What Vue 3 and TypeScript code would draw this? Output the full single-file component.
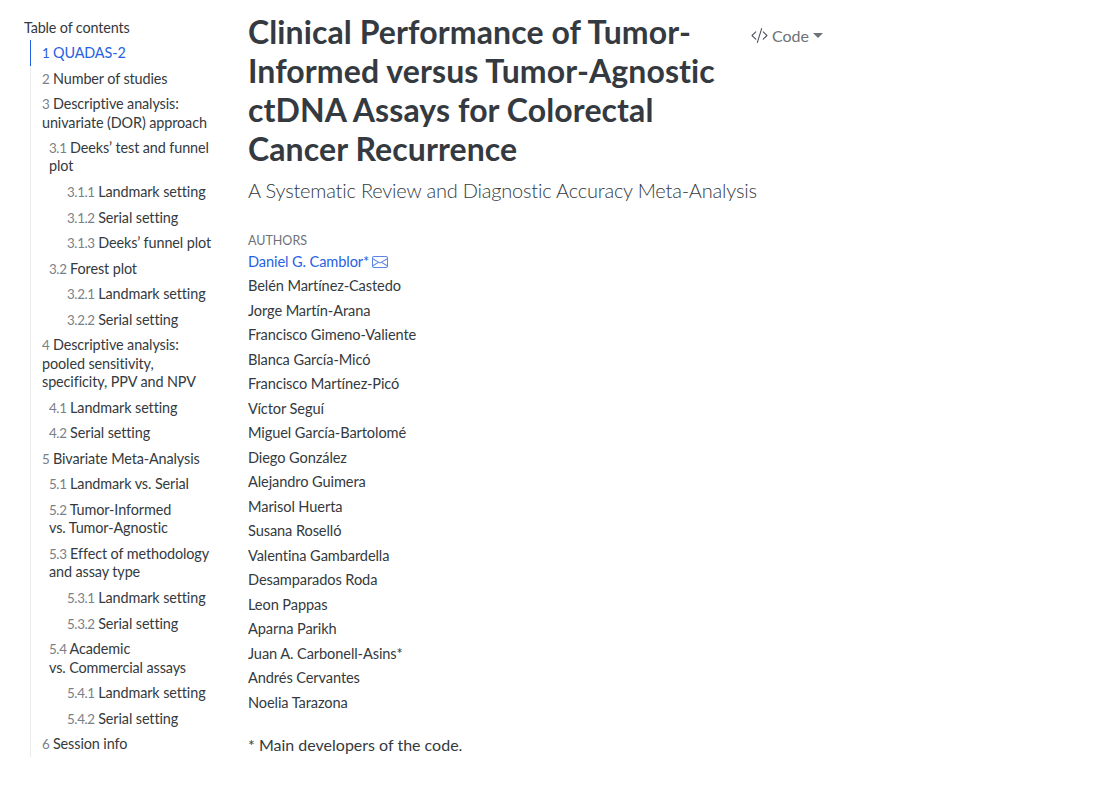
<script setup lang="ts">
type TocItem = { num: string; label: string; level: number; active?: boolean };

const toc: TocItem[] = [
  { num: '1', label: 'QUADAS-2', level: 1, active: true },
  { num: '2', label: 'Number of studies', level: 1 },
  { num: '3', label: 'Descriptive analysis: univariate (DOR) approach', level: 1 },
  { num: '3.1', label: 'Deeks’ test and funnel plot', level: 2 },
  { num: '3.1.1', label: 'Landmark setting', level: 3 },
  { num: '3.1.2', label: 'Serial setting', level: 3 },
  { num: '3.1.3', label: 'Deeks’ funnel plot', level: 3 },
  { num: '3.2', label: 'Forest plot', level: 2 },
  { num: '3.2.1', label: 'Landmark setting', level: 3 },
  { num: '3.2.2', label: 'Serial setting', level: 3 },
  { num: '4', label: 'Descriptive analysis: pooled sensitivity, specificity, PPV and NPV', level: 1 },
  { num: '4.1', label: 'Landmark setting', level: 2 },
  { num: '4.2', label: 'Serial setting', level: 2 },
  { num: '5', label: 'Bivariate Meta-Analysis', level: 1 },
  { num: '5.1', label: 'Landmark vs. Serial', level: 2 },
  { num: '5.2', label: 'Tumor-Informed vs.\u00a0Tumor-Agnostic', level: 2 },
  { num: '5.3', label: 'Effect of methodology and assay type', level: 2 },
  { num: '5.3.1', label: 'Landmark setting', level: 3 },
  { num: '5.3.2', label: 'Serial setting', level: 3 },
  { num: '5.4', label: 'Academic vs.\u00a0Commercial assays', level: 2 },
  { num: '5.4.1', label: 'Landmark setting', level: 3 },
  { num: '5.4.2', label: 'Serial setting', level: 3 },
  { num: '6', label: 'Session info', level: 1 },
];

const authors = [
  'Belén Martínez-Castedo',
  'Jorge Martín-Arana',
  'Francisco Gimeno-Valiente',
  'Blanca García-Micó',
  'Francisco Martínez-Picó',
  'Víctor Seguí',
  'Miguel García-Bartolomé',
  'Diego González',
  'Alejandro Guimera',
  'Marisol Huerta',
  'Susana Roselló',
  'Valentina Gambardella',
  'Desamparados Roda',
  'Leon Pappas',
  'Aparna Parikh',
  'Juan A. Carbonell-Asins*',
  'Andrés Cervantes',
  'Noelia Tarazona',
];
</script>

<template>
  <div class="page">
    <nav class="sidebar">
      <h2 class="toc-title">Table of contents</h2>
      <ul class="toc">
        <li v-for="item in toc" :key="item.num" :class="['toc-item', `lvl-${item.level}`, { active: item.active }]">
          <span class="num">{{ item.num }}</span> {{ item.label }}
        </li>
      </ul>
    </nav>

    <main class="content">
      <header class="head">
        <div class="title-row">
          <h1 class="title">Clinical Performance of Tumor-Informed versus Tumor-Agnostic ctDNA Assays for Colorectal Cancer Recurrence</h1>
          <button class="code-btn">
            <svg class="code-icon" viewBox="0 0 16 16" width="17" height="17" fill="currentColor">
              <path d="M10.478 1.647a.5.5 0 1 0-.956-.294l-4 13a.5.5 0 0 0 .956.294zM4.854 4.146a.5.5 0 0 1 0 .708L1.707 8l3.147 3.146a.5.5 0 0 1-.708.708l-3.5-3.5a.5.5 0 0 1 0-.708l3.5-3.5a.5.5 0 0 1 .708 0m6.292 0a.5.5 0 0 0 0 .708L14.293 8l-3.147 3.146a.5.5 0 0 0 .708.708l3.5-3.5a.5.5 0 0 0 0-.708l-3.5-3.5a.5.5 0 0 0-.708 0" />
            </svg>
            <span>Code</span>
            <i class="caret"></i>
          </button>
        </div>
        <p class="subtitle">A Systematic Review and Diagnostic Accuracy Meta-Analysis</p>
      </header>

      <section class="authors">
        <div class="authors-label">AUTHORS</div>
        <div class="author link">
          Daniel G. Camblor*
          <svg class="mail" viewBox="0 0 16 16" width="16" height="16" fill="currentColor">
            <path d="M0 4a2 2 0 0 1 2-2h12a2 2 0 0 1 2 2v8a2 2 0 0 1-2 2H2a2 2 0 0 1-2-2zm2-1a1 1 0 0 0-1 1v.217l7 4.2 7-4.2V4a1 1 0 0 0-1-1zm13 2.383-4.708 2.825L15 11.105zm-.034 6.876-5.64-3.471L8 9.583l-1.326-.795-5.64 3.47A1 1 0 0 0 2 13h12a1 1 0 0 0 .966-.741M1 11.105l4.708-2.897L1 5.383z" />
          </svg>
        </div>
        <div v-for="name in authors" :key="name" class="author">{{ name }}</div>
      </section>

      <p class="note">* Main developers of the code.</p>
    </main>
  </div>
</template>

<style>
html, body {
  margin: 0;
  background: #fff;
}
</style>

<style scoped>
.page {
  display: flex;
  align-items: flex-start;
  height: 796px;
  overflow: hidden;
  font-family: Lato, "Liberation Sans", sans-serif;
  font-variant-ligatures: none;
  color: #343a40;
}
.sidebar {
  width: 248px;
  box-sizing: border-box;
  padding: 19px 0 0 24px;
  flex: none;
}
.toc-title {
  margin: 0 0 3px;
  font-size: 14.4px;
  font-weight: 400;
  line-height: 18.4px;
  letter-spacing: -0.15px;
}
.toc {
  list-style: none;
  margin: 0 0 0 6px;
  padding: 0;
  border-left: 1px solid #e9ecef;
  width: 186px;
}
.toc-item {
  padding: 3.58px 0 3.58px 11px;
  font-size: 14.4px;
  line-height: 18.4px;
  letter-spacing: -0.1px;
}
.toc-item.lvl-2 {
  padding-left: 18px;
}
.toc-item.lvl-3 {
  padding-left: 36px;
}
.toc-item.active {
  color: #2761e3;
  border-left: 1px solid #2761e3;
  margin-left: -1px;
}
.toc-item.active .num {
  color: #2761e3;
}
.num {
  font-size: 13.4px;
  color: #7a8087;
  letter-spacing: -0.4px;
}
.content {
  width: 600px;
  flex: none;
  padding-top: 12px;
}
.title-row {
  display: flex;
  align-items: flex-start;
}
.title {
  width: 487px;
  margin: 0;
  font-size: 32px;
  font-weight: 700;
  line-height: 39px;
  letter-spacing: 0.1px;
}
.code-btn {
  display: flex;
  align-items: center;
  gap: 4px;
  margin: 14px 0 0 16px;
  padding: 0;
  border: 0;
  background: none;
  font: inherit;
  font-size: 16px;
  color: #6d7278;
}
.code-icon {
  color: #495057;
}
.caret {
  border-top: 5px solid currentColor;
  border-left: 5px solid transparent;
  border-right: 5px solid transparent;
}
.subtitle {
  margin: 8px 0 0;
  font-size: 20px;
  font-weight: 300;
  line-height: 28px;
  letter-spacing: -0.2px;
  white-space: nowrap;
  color: #343a40;
}
.authors {
  margin-top: 29px;
}
.authors-label {
  font-size: 12.5px;
  line-height: 16px;
  color: #6d7278;
}
.author {
  display: flex;
  align-items: center;
  gap: 3px;
  font-size: 14.6px;
  line-height: 24.48px;
  letter-spacing: -0.1px;
}
.author.link {
  color: #2761e3;
  margin-top: 1px;
}
.mail {
  color: #5b86e8;
}
.note {
  margin: 18px 0 0;
  font-size: 16px;
  line-height: 24px;
}
</style>
